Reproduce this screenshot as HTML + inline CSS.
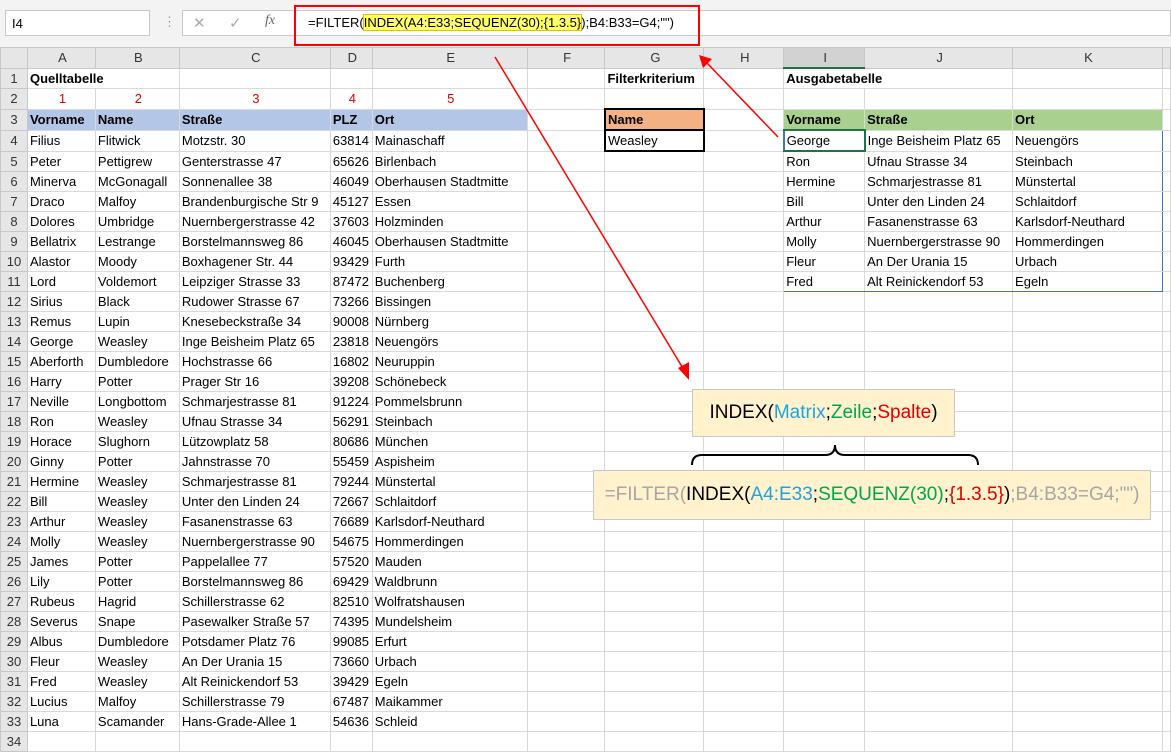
<!DOCTYPE html><html><head><meta charset="utf-8"><style>
body{margin:0;width:1171px;height:740px;overflow:hidden;background:#fff;font-family:"Liberation Sans",sans-serif;position:relative}
#top{position:absolute;left:0;top:0;width:1171px;height:47px;background:#f3f3f3}
.nb{position:absolute;left:5px;top:10px;width:145px;height:26px;background:#fff;border:1px solid #c8c8c8;font-size:13px;line-height:26px;padding-left:6px;box-sizing:border-box}
.fb{position:absolute;left:182px;top:10px;width:989px;height:26px;background:#fff;border:1px solid #c8c8c8;box-sizing:border-box}
.ft{position:absolute;left:308px;top:10px;font-size:13px;line-height:26px;white-space:nowrap}
.hl{background:#ffff66;outline:1px solid #e0c000}
table{position:absolute;left:0;top:47px;border-collapse:collapse;table-layout:fixed;font-size:13px}
td{height:19px;border:1px solid #d9d9d9;padding:0 0 0 2px;white-space:nowrap;overflow:hidden;line-height:19px}
tr.h td{background:#e6e6e6;text-align:center;color:#333;border-color:#c8c8c8}
td.r{background:#e6e6e6;text-align:center;color:#333;border-color:#c8c8c8;padding:0}
.b{font-weight:bold}.red{color:#e00000;text-align:center}
.bl{background:#b4c6e7;font-weight:bold}.gr{background:#a9d08e;font-weight:bold}
.or{background:#f4b183;font-weight:bold}
.c1{position:absolute;left:692px;top:389px;width:263px;height:48px;background:#fff2cc;border:1px solid #c8c8c8;box-sizing:border-box;font-size:19px;line-height:46px;text-align:center}
.c2{position:absolute;left:593px;top:470px;width:558px;height:50px;background:#fff2cc;border:1px solid #c8c8c8;box-sizing:border-box;font-size:19px;line-height:48px;text-align:center;color:#a6a6a6}
.bu{color:#1fa3e0}.gn{color:#00a550}.rd{color:#e00000}.bk{color:#000}
</style></head><body>
<div id="top"><div class="nb">I4</div><div style="position:absolute;left:163px;top:14px;color:#999;font-size:13px">⋮</div><div class="fb"></div>
<div style="position:absolute;left:193px;top:14px;color:#aaa;font-size:15px">✕</div><div style="position:absolute;left:229px;top:14px;color:#aaa;font-size:15px">✓</div><div style="position:absolute;left:265px;top:13px;color:#666;font-size:14px;font-style:italic;font-family:'Liberation Serif',serif">fx</div>
<div class="ft">=FILTER(<span class="hl">INDEX(A4:E33;SEQUENZ(30);{1.3.5}</span>);B4:B33=G4;"")</div></div>
<div style="position:absolute;left:294px;top:5px;width:406px;height:41px;border:2px solid #f00;box-sizing:border-box"></div>
<table>
<colgroup><col style="width:27px"><col style="width:68px"><col style="width:84px"><col style="width:151px"><col style="width:42px"><col style="width:155px"><col style="width:78px"><col style="width:99px"><col style="width:80px"><col style="width:81px"><col style="width:148px"><col style="width:150px"><col style="width:8px"></colgroup>
<tr class="h"><td></td><td>A</td><td>B</td><td>C</td><td>D</td><td>E</td><td>F</td><td>G</td><td>H</td><td style="background:#d2d2d2;border-bottom:2px solid #217346">I</td><td>J</td><td>K</td><td></td></tr>
<tr><td class="r">1</td><td class="b" colspan="2">Quelltabelle</td><td></td><td></td><td></td><td></td><td class="b">Filterkriterium</td><td></td><td class="b" colspan="2">Ausgabetabelle</td><td></td><td></td></tr>
<tr><td class="r">2</td><td class="red">1</td><td class="red">2</td><td class="red">3</td><td class="red">4</td><td class="red">5</td><td></td><td></td><td></td><td></td><td></td><td></td><td></td></tr>
<tr><td class="r">3</td><td class="bl">Vorname</td><td class="bl">Name</td><td class="bl">Straße</td><td class="bl">PLZ</td><td class="bl">Ort</td><td></td><td class="or" style="border:2px solid #000">Name</td><td></td><td class="gr">Vorname</td><td class="gr">Straße</td><td class="gr">Ort</td><td></td></tr>
<tr><td class="r">4</td><td>Filius</td><td>Flitwick</td><td>Motzstr. 30</td><td>63814</td><td>Mainaschaff</td><td></td><td style="border:2px solid #000">Weasley</td><td></td><td style="border:2px solid #217346;border-left-color:#4472c4">George</td><td style="border-top:1px solid #4472c4">Inge Beisheim Platz 65</td><td style="border-top:1px solid #4472c4;border-right:1px solid #4472c4">Neuengörs</td><td></td></tr>
<tr><td class="r">5</td><td>Peter</td><td>Pettigrew</td><td>Genterstrasse 47</td><td>65626</td><td>Birlenbach</td><td></td><td></td><td></td><td style="border-left:1px solid #4472c4">Ron</td><td>Ufnau Strasse 34</td><td style="border-right:1px solid #4472c4">Steinbach</td><td></td></tr>
<tr><td class="r">6</td><td>Minerva</td><td>McGonagall</td><td>Sonnenallee 38</td><td>46049</td><td>Oberhausen Stadtmitte</td><td></td><td></td><td></td><td style="border-left:1px solid #4472c4">Hermine</td><td>Schmarjestrasse 81</td><td style="border-right:1px solid #4472c4">Münstertal</td><td></td></tr>
<tr><td class="r">7</td><td>Draco</td><td>Malfoy</td><td>Brandenburgische Str 9</td><td>45127</td><td>Essen</td><td></td><td></td><td></td><td style="border-left:1px solid #4472c4">Bill</td><td>Unter den Linden 24</td><td style="border-right:1px solid #4472c4">Schlaitdorf</td><td></td></tr>
<tr><td class="r">8</td><td>Dolores</td><td>Umbridge</td><td>Nuernbergerstrasse 42</td><td>37603</td><td>Holzminden</td><td></td><td></td><td></td><td style="border-left:1px solid #4472c4">Arthur</td><td>Fasanenstrasse 63</td><td style="border-right:1px solid #4472c4">Karlsdorf-Neuthard</td><td></td></tr>
<tr><td class="r">9</td><td>Bellatrix</td><td>Lestrange</td><td>Borstelmannsweg 86</td><td>46045</td><td>Oberhausen Stadtmitte</td><td></td><td></td><td></td><td style="border-left:1px solid #4472c4">Molly</td><td>Nuernbergerstrasse 90</td><td style="border-right:1px solid #4472c4">Hommerdingen</td><td></td></tr>
<tr><td class="r">10</td><td>Alastor</td><td>Moody</td><td>Boxhagener Str. 44</td><td>93429</td><td>Furth</td><td></td><td></td><td></td><td style="border-left:1px solid #4472c4">Fleur</td><td>An Der Urania 15</td><td style="border-right:1px solid #4472c4">Urbach</td><td></td></tr>
<tr><td class="r">11</td><td>Lord</td><td>Voldemort</td><td>Leipziger Strasse 33</td><td>87472</td><td>Buchenberg</td><td></td><td></td><td></td><td style="border-left:1px solid #4472c4;border-bottom:1px solid #4472c4">Fred</td><td style="border-bottom:1px solid #4472c4">Alt Reinickendorf 53</td><td style="border-right:1px solid #4472c4;border-bottom:1px solid #4472c4">Egeln</td><td></td></tr>
<tr><td class="r">12</td><td>Sirius</td><td>Black</td><td>Rudower Strasse 67</td><td>73266</td><td>Bissingen</td><td></td><td></td><td></td><td></td><td></td><td></td><td></td></tr>
<tr><td class="r">13</td><td>Remus</td><td>Lupin</td><td>Knesebeckstraße 34</td><td>90008</td><td>Nürnberg</td><td></td><td></td><td></td><td></td><td></td><td></td><td></td></tr>
<tr><td class="r">14</td><td>George</td><td>Weasley</td><td>Inge Beisheim Platz 65</td><td>23818</td><td>Neuengörs</td><td></td><td></td><td></td><td></td><td></td><td></td><td></td></tr>
<tr><td class="r">15</td><td>Aberforth</td><td>Dumbledore</td><td>Hochstrasse 66</td><td>16802</td><td>Neuruppin</td><td></td><td></td><td></td><td></td><td></td><td></td><td></td></tr>
<tr><td class="r">16</td><td>Harry</td><td>Potter</td><td>Prager Str 16</td><td>39208</td><td>Schönebeck</td><td></td><td></td><td></td><td></td><td></td><td></td><td></td></tr>
<tr><td class="r">17</td><td>Neville</td><td>Longbottom</td><td>Schmarjestrasse 81</td><td>91224</td><td>Pommelsbrunn</td><td></td><td></td><td></td><td></td><td></td><td></td><td></td></tr>
<tr><td class="r">18</td><td>Ron</td><td>Weasley</td><td>Ufnau Strasse 34</td><td>56291</td><td>Steinbach</td><td></td><td></td><td></td><td></td><td></td><td></td><td></td></tr>
<tr><td class="r">19</td><td>Horace</td><td>Slughorn</td><td>Lützowplatz 58</td><td>80686</td><td>München</td><td></td><td></td><td></td><td></td><td></td><td></td><td></td></tr>
<tr><td class="r">20</td><td>Ginny</td><td>Potter</td><td>Jahnstrasse 70</td><td>55459</td><td>Aspisheim</td><td></td><td></td><td></td><td></td><td></td><td></td><td></td></tr>
<tr><td class="r">21</td><td>Hermine</td><td>Weasley</td><td>Schmarjestrasse 81</td><td>79244</td><td>Münstertal</td><td></td><td></td><td></td><td></td><td></td><td></td><td></td></tr>
<tr><td class="r">22</td><td>Bill</td><td>Weasley</td><td>Unter den Linden 24</td><td>72667</td><td>Schlaitdorf</td><td></td><td></td><td></td><td></td><td></td><td></td><td></td></tr>
<tr><td class="r">23</td><td>Arthur</td><td>Weasley</td><td>Fasanenstrasse 63</td><td>76689</td><td>Karlsdorf-Neuthard</td><td></td><td></td><td></td><td></td><td></td><td></td><td></td></tr>
<tr><td class="r">24</td><td>Molly</td><td>Weasley</td><td>Nuernbergerstrasse 90</td><td>54675</td><td>Hommerdingen</td><td></td><td></td><td></td><td></td><td></td><td></td><td></td></tr>
<tr><td class="r">25</td><td>James</td><td>Potter</td><td>Pappelallee 77</td><td>57520</td><td>Mauden</td><td></td><td></td><td></td><td></td><td></td><td></td><td></td></tr>
<tr><td class="r">26</td><td>Lily</td><td>Potter</td><td>Borstelmannsweg 86</td><td>69429</td><td>Waldbrunn</td><td></td><td></td><td></td><td></td><td></td><td></td><td></td></tr>
<tr><td class="r">27</td><td>Rubeus</td><td>Hagrid</td><td>Schillerstrasse 62</td><td>82510</td><td>Wolfratshausen</td><td></td><td></td><td></td><td></td><td></td><td></td><td></td></tr>
<tr><td class="r">28</td><td>Severus</td><td>Snape</td><td>Pasewalker Straße 57</td><td>74395</td><td>Mundelsheim</td><td></td><td></td><td></td><td></td><td></td><td></td><td></td></tr>
<tr><td class="r">29</td><td>Albus</td><td>Dumbledore</td><td>Potsdamer Platz 76</td><td>99085</td><td>Erfurt</td><td></td><td></td><td></td><td></td><td></td><td></td><td></td></tr>
<tr><td class="r">30</td><td>Fleur</td><td>Weasley</td><td>An Der Urania 15</td><td>73660</td><td>Urbach</td><td></td><td></td><td></td><td></td><td></td><td></td><td></td></tr>
<tr><td class="r">31</td><td>Fred</td><td>Weasley</td><td>Alt Reinickendorf 53</td><td>39429</td><td>Egeln</td><td></td><td></td><td></td><td></td><td></td><td></td><td></td></tr>
<tr><td class="r">32</td><td>Lucius</td><td>Malfoy</td><td>Schillerstrasse 79</td><td>67487</td><td>Maikammer</td><td></td><td></td><td></td><td></td><td></td><td></td><td></td></tr>
<tr><td class="r">33</td><td>Luna</td><td>Scamander</td><td>Hans-Grade-Allee 1</td><td>54636</td><td>Schleid</td><td></td><td></td><td></td><td></td><td></td><td></td><td></td></tr>
<tr><td class="r">34</td><td></td><td></td><td></td><td></td><td></td><td></td><td></td><td></td><td></td><td></td><td></td><td></td></tr>
</table>
<div class="c1">INDEX(<span class="bu">Matrix</span>;<span class="gn">Zeile</span>;<span class="rd">Spalte</span>)</div>
<div class="c2">=FILTER(<span class="bk">INDEX(</span><span class="bu">A4:E33</span><span class="bk">;</span><span class="gn">SEQUENZ(30)</span><span class="bk">;</span><span class="rd">{1.3.5}</span><span class="bk">)</span>;B4:B33=G4;"")</div>
<svg style="position:absolute;left:0;top:0" width="1171" height="740">
<path d="M692 465 Q692 455 702 455 L825 455 Q835 455 835 445 Q835 455 845 455 L968 455 Q978 455 978 465" fill="none" stroke="#000" stroke-width="2"/>
<line x1="495" y1="57" x2="684" y2="370" stroke="#f00" stroke-width="1.5"/>
<polygon points="689,380 678,368 689,362" fill="#f00"/>
<line x1="778" y1="137" x2="707" y2="63" stroke="#f00" stroke-width="1.5"/>
<polygon points="699,55 712,59 703,68" fill="#f00"/>
</svg>
</body></html>
